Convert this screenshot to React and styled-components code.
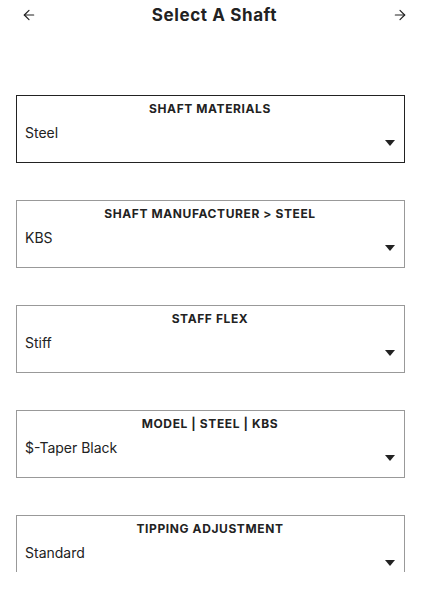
import React from 'react';
import styled, { createGlobalStyle } from 'styled-components';
import { ArrowLeft, ArrowRight } from 'lucide-react';

const GlobalStyle = createGlobalStyle`
  body {
    margin: 0;
    background: #fff;
    font-family: Inter, "Noto Sans", Arial, sans-serif;
    color: #222;
  }
`;

const Page = styled.div`
  width: 441px;
  height: 572px;
  overflow: hidden;
`;

const Header = styled.div`
  display: flex;
  align-items: center;
  justify-content: space-between;
  height: 30px;
  padding: 0 33px 0 21px;
`;

const Title = styled.h1`
  margin: 0;
  font-size: 17px;
  font-weight: 700;
  letter-spacing: 0.6px;
  color: #222;
`;

const IconButton = styled.button`
  display: flex;
  align-items: center;
  border: none;
  background: none;
  padding: 0;
  color: #222;
  cursor: pointer;
`;

const List = styled.div`
  display: flex;
  flex-direction: column;
  gap: 37px;
  padding: 65px 36px 0 16px;
`;

const Field = styled.div`
  position: relative;
  box-sizing: border-box;
  height: 68px;
  flex-shrink: 0;
  border: 1px solid ${p => (p.active ? '#222' : '#999')};
  padding: 6px 9px 0 8px;
`;

const Label = styled.div`
  text-align: center;
  font-size: 12px;
  line-height: 14px;
  font-weight: 700;
  letter-spacing: 0.6px;
  color: #222;
`;

const Value = styled.div`
  margin-top: 8px;
  font-size: 14px;
  line-height: 18px;
  color: #222;
`;

const Caret = styled.span`
  position: absolute;
  right: 9px;
  top: 44px;
  width: 0;
  height: 0;
  border-left: 5px solid transparent;
  border-right: 5px solid transparent;
  border-top: 6px solid #222;
`;

const fields = [
  { label: 'SHAFT MATERIALS', value: 'Steel', active: true },
  { label: 'SHAFT MANUFACTURER > STEEL', value: 'KBS' },
  { label: 'STAFF FLEX', value: 'Stiff' },
  { label: 'MODEL | STEEL | KBS', value: '$-Taper Black' },
  { label: 'TIPPING ADJUSTMENT', value: 'Standard' },
];

export default function App() {
  return (
    <Page>
      <GlobalStyle />
      <Header>
        <IconButton aria-label="Back">
          <ArrowLeft size={16} strokeWidth={1.8} />
        </IconButton>
        <Title>Select A Shaft</Title>
        <IconButton aria-label="Next">
          <ArrowRight size={16} strokeWidth={1.8} />
        </IconButton>
      </Header>
      <List>
        {fields.map(f => (
          <Field key={f.label} active={f.active}>
            <Label>{f.label}</Label>
            <Value>{f.value}</Value>
            <Caret />
          </Field>
        ))}
      </List>
    </Page>
  );
}
